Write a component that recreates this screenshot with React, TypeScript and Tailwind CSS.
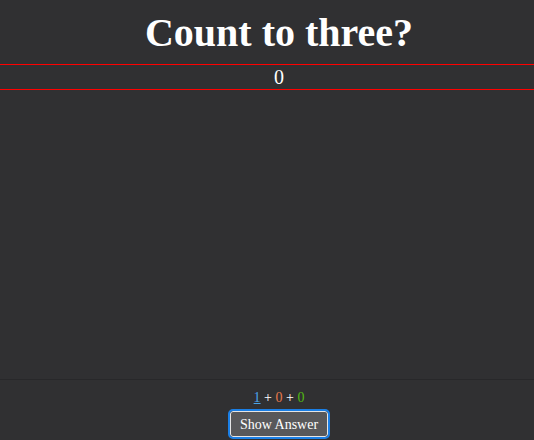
export default function App() {
  return (
    <div className="h-screen flex flex-col bg-[#303032] text-white font-['Liberation_Serif',serif] pl-[24px]">
      <h1 className="h-[65px] flex items-center justify-center text-[40px] font-bold leading-none border-b border-[#ff0000] -ml-[24px] pl-[24px] pt-[2px]">
        Count to three?
      </h1>
      <div className="h-[25px] flex items-center justify-center text-[20px] leading-none border-b border-[#ff0000] -ml-[24px] pl-[24px]">
        0
      </div>
      <div className="flex-1" />
      <div className="border-t border-[#28282a] flex flex-col items-center pt-[9px] pb-[3px] -ml-[24px] pl-[24px]">
        <div className="text-[14px] leading-[18px]">
          <span className="text-[#4aa3e8] underline">1</span>
          <span> + </span>
          <span className="text-[#e8794a]">0</span>
          <span> + </span>
          <span className="text-[#52b812]">0</span>
        </div>
        <button className="mt-[4px] h-[26px] px-[9px] bg-[#58585a] text-[14px] text-white rounded-[3px] border border-[#e5e5e5] outline-2 outline-[#1a7fe6] outline-offset-0">
          Show Answer
        </button>
      </div>
    </div>
  );
}
